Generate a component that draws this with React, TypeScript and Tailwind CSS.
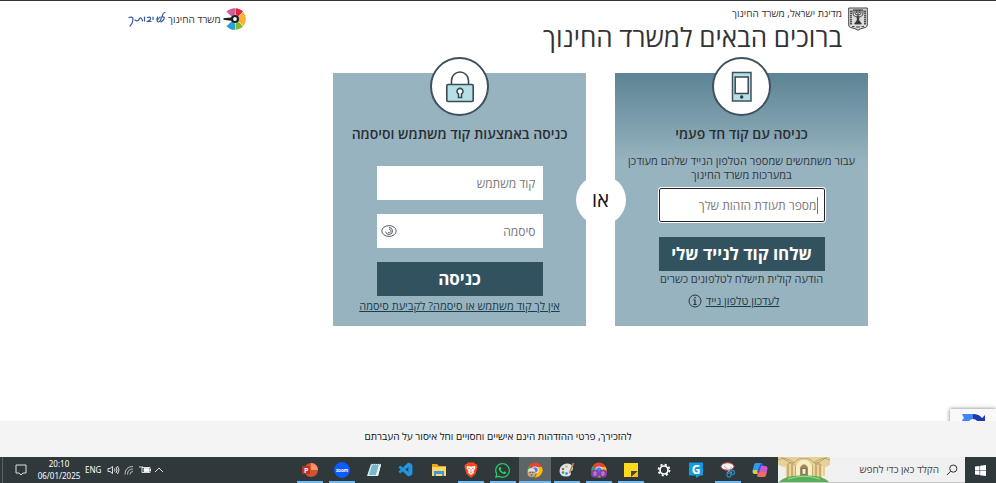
import type { ReactNode } from "react";
import { FaWhatsapp } from "react-icons/fa";
import { VscVscode } from "react-icons/vsc";

function Emblem() {
  return (
    <svg viewBox="0 0 20 24" className="h-6 w-5" fill="none" stroke="#444" aria-hidden="true">
      <path d="M.7 1h18.600v17q0 2-2 2.600-5 .6-7.300 2.600-2.300-2-7.300-2.600-2-.6-2-2.600z" strokeWidth="1" fill="#dcdcdc" />
      <path d="M3 3.500v14M17 3.500v14" strokeWidth="1.800" strokeDasharray="1.500 .6" />
      <path d="M5 3h10" strokeWidth="1.200" />
      <path d="M5 3v3q0 4 5 4t5-4V3M7 3v3q0 2 3 2t3-2V3M10 3v12M8.600 3v3M11.400 3v3" strokeWidth="1" />
      <path d="M9 9.500h2l-.3 3.500 2.800 4h-7l2.800-4z" fill="#333" strokeWidth=".8" />
      <path d="M4 19.500h2.500M8 20h4M13.500 19.500H16" strokeWidth="1" />
    </svg>
  );
}

function MinistryLogo() {
  return (
    <svg viewBox="0 0 24 24" className="h-6 w-6" aria-hidden="true">
      <path d="M12 1.200A10.800 10.800 0 0 0 3.500 4.800l5 4.700L12 7.500z" fill="#c9609a" />
      <path d="M12.500 1.200A10.800 10.800 0 0 1 20 4.700l-4.600 4.500-2.900-1.700z" fill="#e3263b" />
      <path d="M20.400 5.100a10.800 10.800 0 0 1 0 13.800L15.700 14.500V9.500z" fill="#fbb034" />
      <path d="M20 19.300a10.800 10.800 0 0 1-7.500 3.500v-6.300l2.900-1.700z" fill="#86b92c" />
      <path d="M12 22.800a10.800 10.800 0 0 1-8.500-3.600l5-4.700L12 16.500z" fill="#2a9fd6" />
      <path d="M.5 11.200 8 10.400v3.400L.5 12.800z" fill="#1c1c1c" />
      <circle cx="12" cy="12" r="3" fill="#fff" stroke="#1c1c1c" strokeWidth="2.200" />
    </svg>
  );
}

function Signature() {
  return (
    <svg viewBox="0 0 38 17" className="h-[17px] w-[38px]" fill="none" stroke="#3558a8" strokeWidth="1.200" strokeLinecap="round" strokeLinejoin="round" aria-label="לשירותך" role="img">
      <path d="M37 1.500q-2 0-3 4.500 3-.5 2 2-1 2-3 3M29.500 6q-1.500 5 1 5 3-1 2.500-5M29.500 9l2-2.500M25 6v2.500M19.500 6.500q3.500-1 3 1.500-.5 2-3.500 2.500h4M16.500 6v4M14.500 10q-1-4.500-3-2.500-1 2.500-3 2.500l-1.500-1M1 6.500q4-1 4 1.500 0 4-3 7" />
    </svg>
  );
}

function PhoneIcon() {
  return (
    <svg viewBox="0 0 22 32" className="h-8 w-[22px]" aria-hidden="true">
      <rect x="1.500" y="1.500" width="18.500" height="28.500" fill="#b5e0e5" stroke="#3d5360" strokeWidth="1.500" />
      <rect x="4.200" y="6" width="13" height="16.500" fill="#fff" stroke="#3d4550" strokeWidth="1.500" />
      <circle cx="10.700" cy="26" r="1.700" fill="#2d3a45" />
    </svg>
  );
}

function LockIcon() {
  return (
    <svg viewBox="0 0 30 32" className="h-8 w-[30px]" stroke="#3d4a56" strokeWidth="1.600" fill="none" aria-hidden="true">
      <path d="M6.500 14V9.500a8.500 8.500 0 0 1 17 0V14" />
      <rect x="1.800" y="13.500" width="26.400" height="17" rx="1.200" fill="#b5e0e5" />
      <path d="M13.500 23a3 3 0 1 1 3 0v3.500h-3z" fill="#fff" />
    </svg>
  );
}

function EyeIcon() {
  return (
    <svg viewBox="0 0 16 14" className="h-3.5 w-4" fill="none" stroke="#555d63" strokeWidth="1" aria-hidden="true">
      <ellipse cx="8" cy="7" rx="7.200" ry="5.400" />
      <path d="M8 3.500a3.500 3.500 0 1 1-3.400 4.200M8 5.200a1.800 1.800 0 1 1-1 3.200" />
    </svg>
  );
}

function InfoIcon() {
  return (
    <svg viewBox="0 0 14 14" className="h-3.5 w-3.5" fill="none" stroke="#26363f" aria-hidden="true">
      <circle cx="7" cy="7" r="6" />
      <path d="M5.500 6H7v4.500M5.300 10.500h3.400" strokeWidth="1.200" />
      <circle cx="7" cy="3.700" r=".6" fill="#26363f" strokeWidth=".4" />
    </svg>
  );
}

function LoginCard({ icon, title, gradient, children }: { icon: ReactNode; title: string; gradient?: boolean; children: ReactNode }) {
  return (
    <section
      className={`flex h-[253px] w-[253px] flex-col items-center ${gradient ? "bg-linear-to-b from-[#5c8494] to-[#98b3c0] to-35%" : "bg-[#98b3c0]"}`}
    >
      <div className="-mt-4 flex h-[59px] w-[59px] shrink-0 items-center justify-center rounded-full border-2 border-[#3f515e] bg-white">
        {icon}
      </div>
      <h2 className="mt-2 text-sm leading-5 font-semibold whitespace-nowrap text-[#2b2f32]">{title}</h2>
      {children}
    </section>
  );
}

const svgClass = "h-4 w-4";

const apps: { name: string; open?: boolean; active?: boolean; icon: ReactNode }[] = [
  {
    name: "PowerPoint",
    open: true,
    icon: (
      <svg viewBox="0 0 16 16" className={svgClass}>
        <circle cx="9" cy="8" r="7" fill="#d35230" />
        <path d="M9 1a7 7 0 0 1 7 7H9z" fill="#ff8f6b" />
        <rect y="4" width="8" height="8" rx="1" fill="#b7351b" />
        <text x="2" y="10.500" fontSize="7" fontWeight="700" fill="#fff">P</text>
      </svg>
    ),
  },
  {
    name: "Zoom",
    open: true,
    icon: (
      <svg viewBox="0 0 16 16" className={svgClass}>
        <circle cx="8" cy="8" r="7.900" fill="#0b5cff" />
        <text x="8" y="9.500" fontSize="4.500" fontWeight="700" textAnchor="middle" fill="#fff">zoom</text>
      </svg>
    ),
  },
  {
    name: "Notepad",
    icon: (
      <svg viewBox="0 0 16 16" className={svgClass}>
        <path d="M5 2h10l-3 12H1z" fill="#d9eef2" />
        <path d="M6 3h7l-3 10H3z" fill="#78b8c8" />
        <path d="m13 3 2 0-3 11-2-1z" fill="#eef4f5" />
        <path d="M5 2h10" stroke="#62777c" strokeDasharray="1 1" />
      </svg>
    ),
  },
  { name: "Visual Studio Code", icon: <VscVscode className="h-4 w-4 stroke-[#2196e3] stroke-[0.8] text-[#2196e3]" /> },
  {
    name: "File Explorer",
    icon: (
      <svg viewBox="0 0 16 16" className={svgClass}>
        <path d="M1 2h5l2 2h7v10H1z" fill="#e9a820" />
        <path d="M1 5h14v9H1z" fill="#ffd766" />
        <path d="M3 9h10v5h-2v-2H5v2H3z" fill="#3b9bdc" />
      </svg>
    ),
  },
  {
    name: "Brave",
    open: true,
    icon: (
      <svg viewBox="0 0 16 16" className={svgClass}>
        <path d="M5 .5h6l1.300 1.500 1.700.5L14.500 5l-2 7L8 15.700 3.500 12l-2-7L2 2.500 3.700 2z" fill="#fb4a20" />
        <path d="m4 4 4 .8L12 4l.5 2-2 3 .5 1.500-3 2.500-3-2.500.5-1.500-2-3z" fill="#fff" />
        <path d="m5 6 2 .7M11 6l-2 .7M8 7v3M6.500 10 8 11l1.500-1" stroke="#fb4a20" strokeWidth=".7" fill="none" />
      </svg>
    ),
  },
  { name: "WhatsApp", open: true, icon: <FaWhatsapp className="h-[17px] w-[17px] text-[#25d366]" /> },
  {
    name: "Chrome",
    open: true,
    active: true,
    icon: (
      <svg viewBox="0 0 16 16" className={svgClass}>
        <ChromeShape />
        <circle cx="4.500" cy="11" r="4" fill="#c7a98b" />
        <path d="M.8 10q0-4 3.700-4t3.700 4q-3-2-7.400 0" fill="#e6dfd4" />
        <path d="M2.500 10.500h1.300m1.400 0h1.300M3.500 13h2" stroke="#403329" strokeWidth=".8" />
      </svg>
    ),
  },
  {
    name: "Paint",
    open: true,
    icon: (
      <svg viewBox="0 0 16 16" className={svgClass}>
        <path d="M.5 9q0-6 7-7.500 6.500 0 6.500 5 0 2-2.500 3 1.500 5-4 5-7 0-7-5.500" fill="#d5e8f3" />
        <circle cx="4" cy="7" r="1.300" fill="#e64b3c" />
        <circle cx="7.500" cy="4.500" r="1.300" fill="#f0b62a" />
        <circle cx="4" cy="10.500" r="1.300" fill="#3c9b46" />
        <circle cx="7.500" cy="11.500" r="1.300" fill="#347fce" />
        <path d="m14.500 1-4 10" stroke="#c78142" strokeWidth="1.700" />
      </svg>
    ),
  },
  {
    name: "Chrome profile",
    open: true,
    icon: (
      <svg viewBox="0 0 16 16" className={svgClass}>
        <ChromeShape />
        <circle cx="4" cy="11.500" r="4" fill="#8e3bb0" />
        <circle cx="12" cy="11.500" r="4" fill="#8e3bb0" />
        <path d="M3 10h2v3H3zM11 10h2v3h-2z" fill="none" stroke="#ddb7eb" strokeWidth=".7" />
      </svg>
    ),
  },
  {
    name: "Sticky Notes",
    open: true,
    icon: (
      <svg viewBox="0 0 16 16" className={svgClass}>
        <path d="M1 1h14v14H1z" fill="#ffd91f" />
        <path d="M8 15V9h7z" fill="#4a4637" />
        <path d="M15 9v6H9z" fill="#f3c400" />
      </svg>
    ),
  },
  {
    name: "Settings",
    icon: (
      <svg viewBox="0 0 16 16" className={svgClass} fill="none" stroke="#fff">
        <circle cx="8" cy="8" r="4" strokeWidth="1.700" />
        <circle cx="8" cy="8" r="5.500" strokeWidth="1.700" strokeDasharray="2.160 2.160" />
      </svg>
    ),
  },
  {
    name: "G",
    icon: (
      <svg viewBox="0 0 16 16" className={svgClass}>
        <path d="M1 .5h14v13h-3L8 16v-2.500H1z" fill="#179be0" />
        <text x="8" y="11.500" fontSize="12" fontWeight="700" textAnchor="middle" fill="#fff">G</text>
      </svg>
    ),
  },
  {
    name: "Snipping Tool",
    open: true,
    icon: (
      <svg viewBox="0 0 16 16" className={svgClass}>
        <ellipse cx="7.500" cy="4.500" rx="6.500" ry="3.700" fill="#f3f0ef" stroke="#d44a4a" />
        <path d="m4 4 8 7M12 5l-5 6" stroke="#aab5ba" />
        <circle cx="12.500" cy="10.500" r="2" fill="none" stroke="#2c80b7" strokeWidth="1.400" />
        <circle cx="9" cy="13" r="2" fill="none" stroke="#2c80b7" strokeWidth="1.400" />
      </svg>
    ),
  },
  {
    name: "Copilot",
    icon: (
      <svg viewBox="0 0 16 16" className={svgClass}>
        <path d="M4 1h5q2 0 1.500 2L8 12H3q-3 0-2.500-3L2 3q.5-2 2-2" fill="#2c9be8" />
        <path d="M1 8h5l-1 4H3q-3 0-2-4" fill="#e9c637" />
        <path d="M8 4h5q3 0 2.500 3L14 13q-.5 2-2 2H7q-2 0-1.500-2z" fill="#ca58d1" />
        <path d="M6.500 10h8L14 13q-.5 2-2 2H7q-2 0-1.500-2z" fill="#f36c54" />
        <path d="M9 1q2 0 3 3H9L7 11l-2-1z" fill="#3151cf" />
      </svg>
    ),
  },
];

function ChromeShape() {
  return (
    <>
      <circle cx="8" cy="8" r="7.500" fill="#e94335" />
      <path d="M8 8 1.500 4.200A7.500 7.500 0 0 0 8 15.500z" fill="#34a853" />
      <path d="M8 5h6.900A7.500 7.500 0 0 1 8 15.500L11 9z" fill="#fbbc05" />
      <circle cx="8" cy="8" r="3.600" fill="#fff" />
      <circle cx="8" cy="8" r="2.800" fill="#4285f4" />
    </>
  );
}

function SynagogueArt() {
  return (
    <svg viewBox="0 0 52 26" className="h-full w-[52px] shrink-0" preserveAspectRatio="none" aria-hidden="true">
      <rect width="52" height="26" fill="#f0f0f0" />
      <path d="M0 0h52v8l-5 3v9H7v-9L0 8z" fill="#e5d29a" />
      <path d="M8 9q5-8 10 0v13H8zM34 9q5-8 10 0v13H34z" fill="#c8ac6e" />
      <path d="M18 9q8-13 16 0v13H18z" fill="#f7edc5" />
      <path d="M22 11q4-7 8 0v10h-8z" fill="#a68750" />
      <path d="M8 9v12M12 7v14M16 8v12M20 8v12M32 8v12M36 7v14M40 8v13M44 9v12" stroke="#fff1c4" strokeWidth="1.200" />
      <path d="M0 3q8-4 16 3 5-6 10-4 5-2 10 4 8-7 16-3M3 0l9 6M49 0l-9 6" fill="none" stroke="#a88e57" strokeWidth=".7" />
      <path d="M24 12h4v6h-4z" fill="#e7eef2" stroke="#6c5e40" strokeWidth=".8" />
      <path d="M1 26q6-7 25-7t25 7z" fill="#58ae57" />
      <path d="M10 23q8-3 16-3t16 3" fill="none" stroke="#9adf8e" />
    </svg>
  );
}

function Taskbar() {
  return (
    <footer dir="ltr" className="flex h-[26px] shrink-0 items-stretch justify-between bg-[#2f393b] text-white">
      <div className="flex items-center font-['Noto_Sans',sans-serif] text-[8px]">
        <span className="ml-0.5 h-full w-px bg-[#596365]" />
        <button type="button" aria-label="Notifications" className="ml-3">
          <svg viewBox="0 0 12 12" className="h-3 w-3" fill="none" stroke="#f1f1f1" strokeWidth=".9">
            <path d="M1 1h10v8H8l-2 2-2-2H1z" />
          </svg>
        </button>
        <time className="ml-2.5 flex w-11 flex-col items-center leading-[12px]">
          <span>20:10</span>
          <span>06/01/2025</span>
        </time>
        <span className="ml-1">ENG</span>
        <svg viewBox="0 0 60 12" className="ml-1.5 h-3 w-[60px]" fill="none" stroke="#f1f1f1" strokeWidth=".9" aria-hidden="true">
          <path d="M1 4.500h2l2.500-2v7L3 7.500H1zM7.500 4.500q1 1.500 0 3M9 3q2 3 0 6M10.500 2q3 4 0 8" />
          <path d="M18 10.500q0-8 8-8M20.500 10.500q0-5.500 5.500-5.500M23 10.500q0-3 3-3" opacity=".8" />
          <path d="M35 3.500h8v5h-8zM43.500 5v2M33 2v2m2-2v2" />
          <path d="M37 4.500h5v3h-5z" fill="#fff" />
          <path d="m48 8 4-4 4 4" />
        </svg>
      </div>
      <div className="flex">
        <nav aria-label="יישומים" className="mr-0.5 grid w-[482px] grid-cols-15">
          {apps.map((app) => (
            <button
              key={app.name}
              type="button"
              aria-label={app.name}
              className={`flex flex-col items-center pt-1 ${app.active ? "bg-[#5c6667]" : "px-[3px]"}`}
            >
              <span className="flex h-[18px] items-center">{app.icon}</span>
              <span className={`mt-0.5 h-0.5 w-full ${app.open ? "bg-[#76b9ed]" : ""}`} />
            </button>
          ))}
        </nav>
        <div className="flex w-[187px] items-center border-b border-[#c8c8c8] bg-[#f0f0f0]">
          <SynagogueArt />
          <input dir="rtl" aria-label="חיפוש" placeholder="הקלד כאן כדי לחפש" className="min-w-0 flex-1 bg-transparent text-[10px] placeholder:text-[#444]" />
          <svg viewBox="0 0 12 12" className="mx-[7px] h-3 w-3 shrink-0" fill="none" stroke="#333" aria-hidden="true">
            <circle cx="7.300" cy="4.600" r="3.600" />
            <path d="M4.700 7.200 1 11" />
          </svg>
        </div>
        <button type="button" aria-label="Start" className="flex w-[31px] items-center justify-center">
          <svg viewBox="0 0 12 12" className="h-[11px] w-[11px]" fill="#fff">
            <path d="m0 1.700 5-.7v4.700H0zM5.600.9 12 0v5.700H5.600zM0 6.300h5V11l-5-.7zM5.600 6.300H12V12l-6.400-.9z" />
          </svg>
        </button>
      </div>
    </footer>
  );
}

const fieldClass = "h-[34px] w-full bg-white px-[7px] text-xs text-[#333] placeholder:text-[#777]";
const submitClass = "h-[34px] w-full bg-[#32525f] text-[17px] leading-6 font-bold whitespace-nowrap text-white";

export default function App() {
  return (
    <div dir="rtl" className="flex min-h-screen flex-col overflow-x-hidden border-t border-[#333] bg-white font-['Open_Sans','Noto_Sans',sans-serif] text-[#333]">
      <div className="relative flex-1 overflow-hidden">
        <div className="mx-auto max-w-[740px]">
          <header className="flex items-start justify-between pt-1.5">
            <div className="flex gap-1.5">
              <Emblem />
              <div>
                <p className="text-[10px] leading-3">מדינת ישראל, משרד החינוך</p>
                <h1 className="text-[26px] leading-9 whitespace-nowrap">ברוכים הבאים למשרד החינוך</h1>
              </div>
            </div>
            <div className="flex items-center gap-0.5 text-[10px]">
              <MinistryLogo />
              <span>משרד החינוך</span>
              <Signature />
            </div>
          </header>

          <main className="mt-[18px] flex">
            <LoginCard icon={<PhoneIcon />} title="כניסה עם קוד חד פעמי" gradient>
              <p className="mt-2.5 text-center text-[11px] leading-[14px] text-[#30383c]">
                <span className="whitespace-nowrap">עבור משתמשים שמספר הטלפון הנייד שלהם מעודכן</span>
                <br />
                במערכות משרד החינוך
              </p>
              <form className="mt-1.5 flex w-[166px] flex-col" onSubmit={(e) => e.preventDefault()}>
                <div className="flex items-center rounded-xs border border-[#222] bg-white pr-1.5 outline outline-white">
                  <span className="h-[17px] w-px bg-[#777]" />
                  <input aria-label="מספר תעודת הזהות שלך" placeholder="מספר תעודת הזהות שלך" className="h-8 min-w-0 flex-1 text-xs placeholder:text-[#777]" />
                </div>
                <button type="submit" className={`mt-[15px] ${submitClass}`}>שלחו קוד לנייד שלי</button>
              </form>
              <p className="text-[11px] leading-4 whitespace-nowrap text-[#30383c]">הודעה קולית תישלח לטלפונים כשרים</p>
              <div className="mt-1.5 flex items-center gap-1 pr-4 text-[11px] leading-4">
                <a href="#update" className="text-[#193d4a] underline">לעדכון טלפון נייד</a>
                <button type="button" aria-label="מידע נוסף"><InfoIcon /></button>
              </div>
            </LoginCard>

            <div className="relative flex w-[29px] items-center justify-center">
              <span className="absolute flex h-[50px] w-[50px] items-center justify-center rounded-full bg-white text-xl text-[#111]">או</span>
            </div>

            <LoginCard icon={<LockIcon />} title="כניסה באמצעות קוד משתמש וסיסמה">
              <form className="mt-[22px] flex w-[166px] flex-col gap-3.5" onSubmit={(e) => e.preventDefault()}>
                <input aria-label="קוד משתמש" placeholder="קוד משתמש" className={fieldClass} />
                <div className="flex items-center bg-white">
                  <input type="password" aria-label="סיסמה" placeholder="סיסמה" className={`min-w-0 ${fieldClass}`} />
                  <button type="button" aria-label="הצגת סיסמה" className="ml-1 shrink-0"><EyeIcon /></button>
                </div>
                <button type="submit" className={submitClass}>כניסה</button>
              </form>
              <a href="#reset" className="mt-0.5 text-[11px] leading-4 whitespace-nowrap text-[#193d4a] underline">אין לך קוד משתמש או סיסמה? לקביעת סיסמה</a>
            </LoginCard>
          </main>
        </div>
        <div className="absolute right-0 -bottom-12 flex h-[60px] w-[46px] justify-center bg-[#f9f9f9] pt-[5px] shadow-[0_0_4px_#777]">
          <svg viewBox="0 0 24 24" className="h-6 w-6" aria-hidden="true">
            <path d="M12 0q6 0 9 4l3-3v11H13l4-4q-2-3-5-3z" fill="#1c3aa9" />
            <path d="M12 0v5q-4 0-5 5l3 3H0q0-6 3-9L1 0z" fill="#4285f4" />
          </svg>
        </div>
      </div>
      <div className="flex h-9 shrink-0 items-center justify-center bg-[#f4f4f4] pb-1.5 text-[10px] text-[#111]">
        <p>להזכירך, פרטי ההזדהות הינם אישיים וחסויים וחל איסור על העברתם</p>
      </div>
      <Taskbar />
    </div>
  );
}
